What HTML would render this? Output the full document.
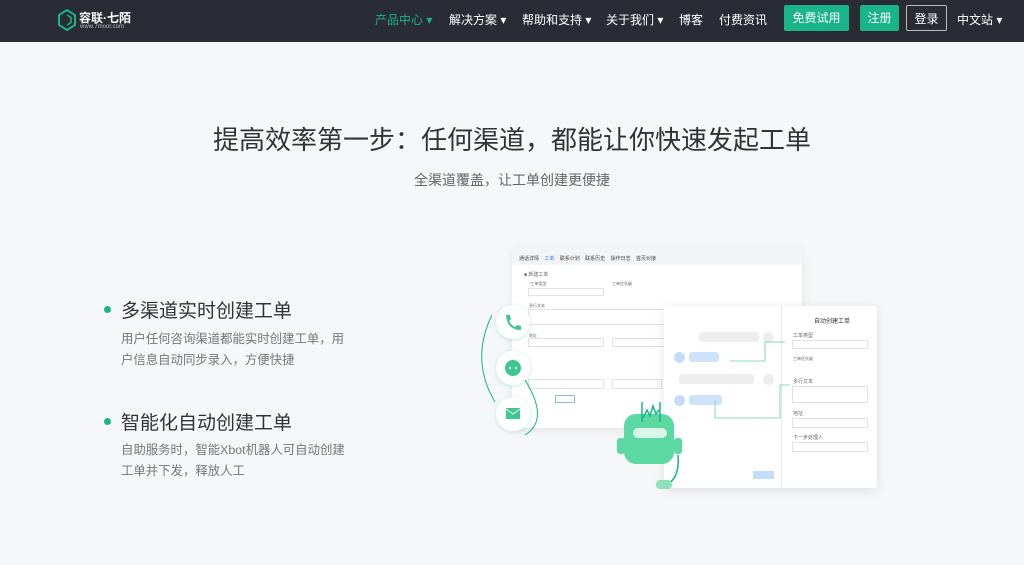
<!DOCTYPE html>
<html><head><meta charset="utf-8"><style>
*{margin:0;padding:0;box-sizing:border-box}
body{width:1024px;height:565px;overflow:hidden;background:#f6f7f9;font-family:"Liberation Sans","Noto Sans CJK SC",sans-serif;position:relative}
.nav{position:absolute;left:0;top:0;width:1024px;height:42px;background:#292c35;color:#fff;font-size:12px}
.nav span{position:absolute;top:11px}
.btn{position:absolute;top:5px;height:26px;border-radius:2px;font-size:12px;line-height:26px;text-align:center;color:#fff}
.a{position:absolute}
.t{font-size:4px;color:#666;position:absolute}
.box{position:absolute;border:1px solid #dfe2e6;background:#fff}
</style></head><body>
<div class="nav">
<svg class="a" style="left:58px;top:9px" width="18" height="22" viewBox="0 0 18 22"><path d="M9 1L17 6V16L9 21L1 16V6Z" fill="none" stroke="#19b487" stroke-width="2"/><path d="M9 6L13 8.5V13.5L9 16" fill="none" stroke="#19b487" stroke-width="1.5"/></svg>
<span style="left:79px;top:9px;font-size:12px;font-weight:bold">容联·七陌</span>
<span style="left:80px;top:24px;font-size:6px;color:#bbb">www.7moor.com</span>
<span style="left:375px;color:#19b487">产品中心 ▾</span>
<span style="left:449px">解决方案 ▾</span>
<span style="left:522px">帮助和支持 ▾</span>
<span style="left:606px">关于我们 ▾</span>
<span style="left:679px">博客</span>
<span style="left:719px">付费资讯</span>
<div class="btn" style="left:784px;width:65px;background:#19b487">免费试用</div>
<div class="btn" style="left:860px;width:39px;background:#19b487">注册</div>
<div class="btn" style="left:906px;width:41px;border:1px solid #bbb">登录</div>
<span style="left:957px">中文站 ▾</span>
</div>
<div class="a" style="left:0;top:120px;width:1024px;text-align:center;font-size:26px;color:#333">提高效率第一步：任何渠道，都能让你快速发起工单</div>
<div class="a" style="left:0;top:170px;width:1024px;text-align:center;font-size:14px;color:#666">全渠道覆盖，让工单创建更便捷</div>
<div class="a" style="left:104px;top:306px;width:7px;height:7px;border-radius:50%;background:#19b487"></div>
<div class="a" style="left:121px;top:296px;font-size:19px;color:#333">多渠道实时创建工单</div>
<div class="a" style="left:121px;top:329px;width:260px;font-size:12.4px;line-height:21px;color:#777;white-space:nowrap">用户任何咨询渠道都能实时创建工单，用<br>户信息自动同步录入，方便快捷</div>
<div class="a" style="left:104px;top:418px;width:7px;height:7px;border-radius:50%;background:#19b487"></div>
<div class="a" style="left:121px;top:408px;font-size:19px;color:#333">智能化自动创建工单</div>
<div class="a" style="left:121px;top:440px;width:260px;font-size:12.4px;line-height:21px;color:#777;white-space:nowrap">自助服务时，智能Xbot机器人可自动创建<br>工单并下发，释放人工</div>

<div class="a" style="left:512px;top:248px;width:290px;height:180px;background:#fff;border-radius:3px;box-shadow:0 2px 10px rgba(0,0,0,.08)">
<div style="height:17px;background:#f3f4f6;font-size:5px;color:#444;padding:7px 7px;word-spacing:4px">通话详情 <span style="color:#2c7be5">工单</span> 联系计划 联系历史 操作日志 首页对接</div>
<div class="t" style="left:12px;top:23px;font-size:5px">■ 新建工单</div>
<div class="t" style="left:17px;top:33px">*工单类型</div><div class="box" style="left:16px;top:40px;width:76px;height:8px"></div>
<div class="t" style="left:100px;top:33px">工单优先级</div>
<div class="t" style="left:17px;top:55px">多行文本</div><div class="box" style="left:16px;top:61px;width:180px;height:16px"></div>
<div class="t" style="left:17px;top:85px">地址</div><div class="box" style="left:16px;top:90px;width:76px;height:9px"></div><div class="box" style="left:100px;top:90px;width:60px;height:9px"></div>
<div class="box" style="left:16px;top:131px;width:76px;height:10px"></div><div class="box" style="left:100px;top:131px;width:50px;height:10px"></div>
<div class="box" style="left:43px;top:147px;width:20px;height:8px;border-color:#8ab8f0"></div>
</div>
<div class="a" style="left:664px;top:306px;width:213px;height:182px;background:#fff;border-radius:3px;box-shadow:0 2px 12px rgba(0,0,0,.1)">
<div style="position:absolute;left:117px;top:0;width:1px;height:182px;background:#e6e6e6"></div>
<div class="t" style="left:150px;top:10px;font-size:6px;color:#333">自动创建工单</div>
<div class="t" style="left:129px;top:26px;font-size:5px">工单类型</div><div class="box" style="left:128px;top:34px;width:76px;height:9px"></div>
<div class="t" style="left:129px;top:50px">工单优先级</div>
<div class="t" style="left:129px;top:72px;font-size:5px">多行文本</div><div class="box" style="left:128px;top:80px;width:76px;height:17px"></div>
<div class="t" style="left:129px;top:104px;font-size:5px">地址</div><div class="box" style="left:128px;top:112px;width:76px;height:10px"></div>
<div class="t" style="left:129px;top:128px;font-size:5px">下一步处理人</div><div class="box" style="left:128px;top:136px;width:76px;height:10px"></div>
<div class="a" style="left:35px;top:26px;width:60px;height:10px;background:#eee;border-radius:3px"></div><div class="a" style="left:99px;top:26px;width:11px;height:11px;border-radius:50%;background:#eee"></div>
<div class="a" style="left:10px;top:46px;width:11px;height:11px;border-radius:50%;background:#c5dcf8"></div><div class="a" style="left:25px;top:46px;width:30px;height:10px;background:#cfe2fb;border-radius:3px"></div>
<div class="a" style="left:15px;top:68px;width:75px;height:10px;background:#eee;border-radius:3px"></div><div class="a" style="left:99px;top:68px;width:11px;height:11px;border-radius:50%;background:#eee"></div>
<div class="a" style="left:10px;top:89px;width:11px;height:11px;border-radius:50%;background:#c5dcf8"></div><div class="a" style="left:25px;top:89px;width:33px;height:10px;background:#cfe2fb;border-radius:3px"></div>
<div class="a" style="left:89px;top:165px;width:21px;height:8px;background:#c5dcf8"></div>
</div>
<svg class="a" style="left:480px;top:300px" width="400" height="200">
<defs><filter id="s" x="-50%" y="-50%" width="200%" height="200%"><feDropShadow dx="0" dy="1" stdDeviation="2.5" flood-color="#19b487" flood-opacity=".25"/></filter></defs>
<path d="M12 15 Q-10 60 15 102" fill="none" stroke="#19b487" stroke-width="1"/>
<path d="M45 80 Q70 120 45 135" fill="none" stroke="#19b487" stroke-width="1"/>
<path d="M250 61 H285 V42 H305" fill="none" stroke="#5cd0ac" stroke-width="0.8"/>
<path d="M235 101 V118 H300 V85 H310" fill="none" stroke="#5cd0ac" stroke-width="0.8"/>
<g fill="#fff" filter="url(#s)"><circle cx="33" cy="22" r="17"/><circle cx="33" cy="68" r="17"/><circle cx="33" cy="114" r="17"/></g>
<path d="M26 15 l4 0 l1 4 l-2 2 q2 4 6 6 l2-2 l4 1 l0 4 q-14 0-15-15z" fill="#3cc690"/>
<circle cx="33" cy="68" r="8" fill="#3cc690"/><circle cx="30" cy="68" r="1.2" fill="#fff"/><circle cx="36" cy="68" r="1.2" fill="#fff"/>
<rect x="26" y="108" width="14" height="11" fill="#3cc690"/><path d="M26 109 L33 114 L40 109" fill="none" stroke="#fff" stroke-width="1"/>
<rect x="144" y="114" width="50" height="50" rx="12" fill="#5cd8a2"/>
<rect x="153" y="128" width="34" height="10" rx="5" fill="#d8f5e8"/>
<rect x="137" y="138" width="8" height="16" rx="3" fill="#5cd8a2"/><rect x="194" y="138" width="8" height="16" rx="3" fill="#5cd8a2"/>
<path d="M198 155 Q200 180 185 185" fill="none" stroke="#19b487" stroke-width="1.5"/>
<rect x="176" y="180" width="16" height="9" rx="4" fill="#8ee0b8"/>
<path d="M162 122 V102 M180 122 V102 M163 118 l4-8 l3 6 l3-10 l3 8 l3-4" fill="none" stroke="#19b487" stroke-width="1.5"/>
</svg>
</body></html>
